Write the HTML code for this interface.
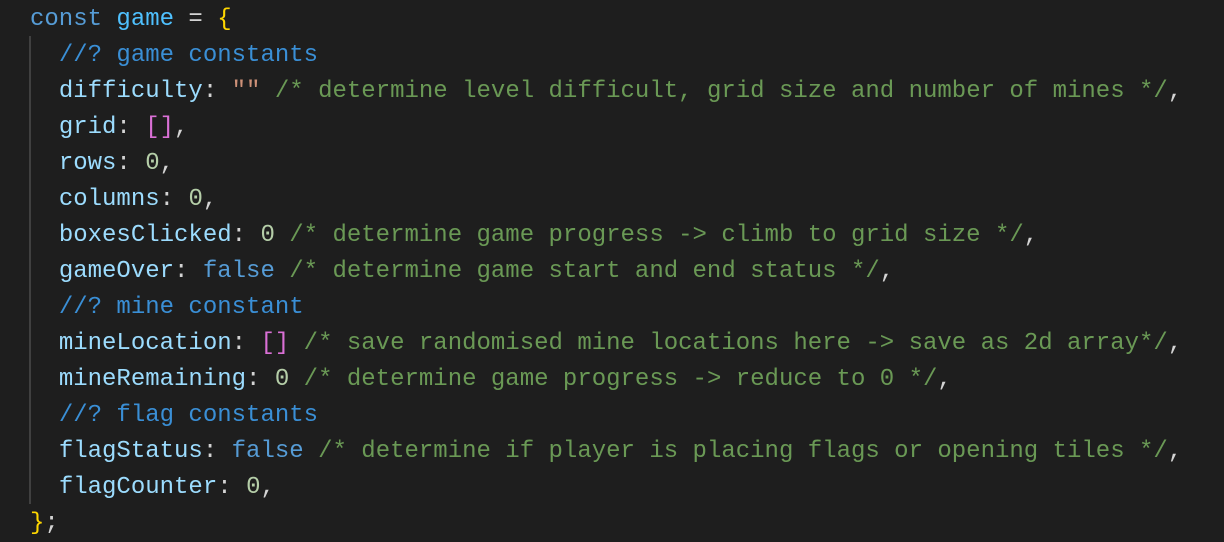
<!DOCTYPE html>
<html><head><style>
html,body{margin:0;padding:0;background:#1e1e1e;width:1224px;height:540px;overflow:hidden}
pre{margin:0;position:absolute;left:30px;top:2px;font-family:"Liberation Mono",monospace;font-size:24px;line-height:36px;color:#d4d4d4;white-space:pre}
.k{color:#569cd6}.v{color:#4fc1ff}.p{color:#9cdcfe}.c{color:#6a9955}.bc{color:#3a8fd6}.n{color:#b5cea8}.s{color:#ce9178}.b{color:#ffd700}.br{color:#da70d6}
.guide{position:absolute;left:29px;top:36px;width:2px;height:468px;background:#404040}
</style></head><body>
<div class="guide"></div>
<pre><span class="k">const</span> <span class="v">game</span> = <span class="b">{</span>
  <span class="bc">//? game constants</span>
  <span class="p">difficulty</span>: <span class="s">""</span> <span class="c">/* determine level difficult, grid size and number of mines */</span>,
  <span class="p">grid</span>: <span class="br">[]</span>,
  <span class="p">rows</span>: <span class="n">0</span>,
  <span class="p">columns</span>: <span class="n">0</span>,
  <span class="p">boxesClicked</span>: <span class="n">0</span> <span class="c">/* determine game progress -&gt; climb to grid size */</span>,
  <span class="p">gameOver</span>: <span class="k">false</span> <span class="c">/* determine game start and end status */</span>,
  <span class="bc">//? mine constant</span>
  <span class="p">mineLocation</span>: <span class="br">[]</span> <span class="c">/* save randomised mine locations here -&gt; save as 2d array*/</span>,
  <span class="p">mineRemaining</span>: <span class="n">0</span> <span class="c">/* determine game progress -&gt; reduce to 0 */</span>,
  <span class="bc">//? flag constants</span>
  <span class="p">flagStatus</span>: <span class="k">false</span> <span class="c">/* determine if player is placing flags or opening tiles */</span>,
  <span class="p">flagCounter</span>: <span class="n">0</span>,
<span class="b">}</span>;</pre>
</body></html>
